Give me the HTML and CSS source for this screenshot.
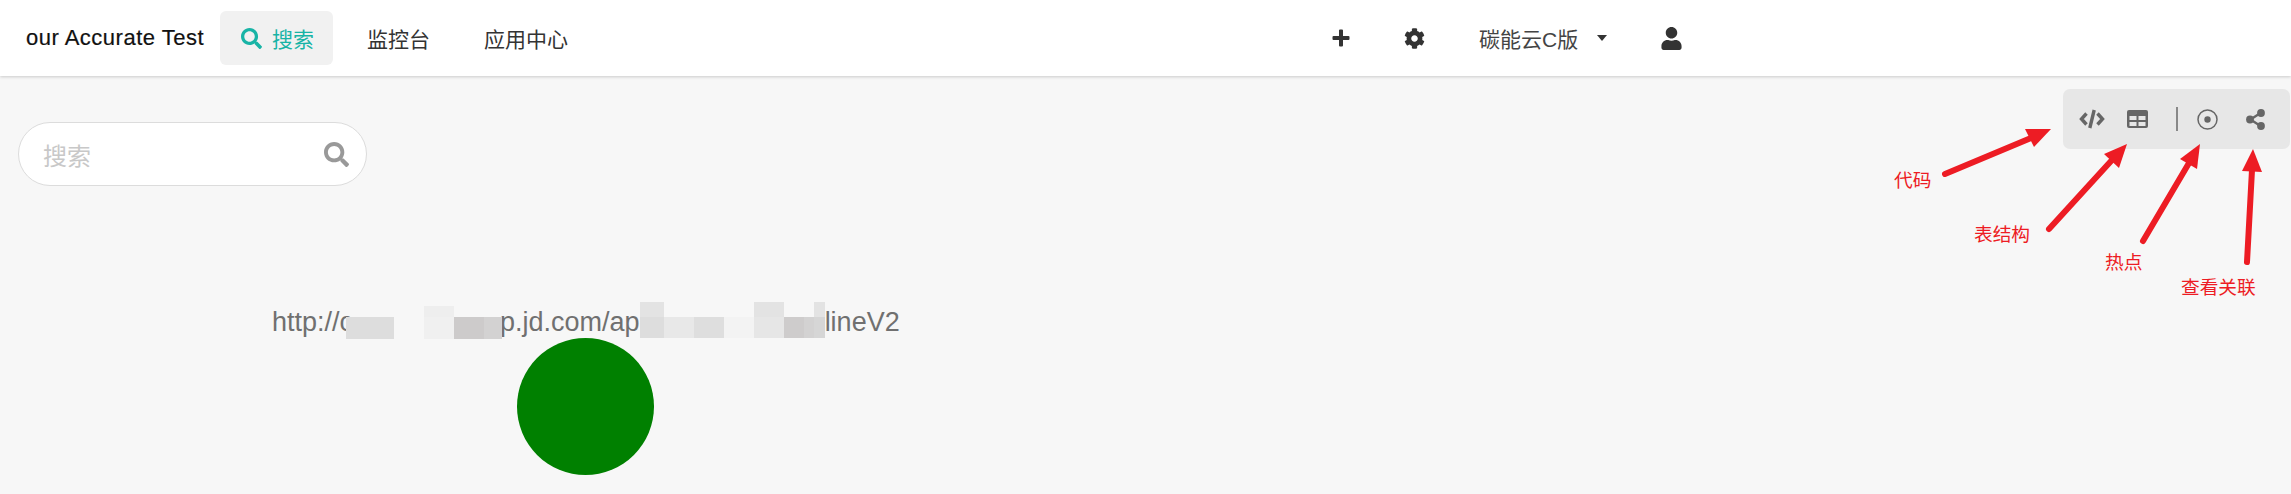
FILE: index.html
```html
<!DOCTYPE html>
<html lang="en">
<head>
  <meta charset="UTF-8" />
  <title>Accurate Test</title>
  <link rel="stylesheet" href="styles.css">
</head>
<body>

  <!-- Top nav -->
  <div class="navbar">
    <div class="brand">our Accurate Test</div>
    <div class="nav-links">
      <a class="nav-item active">
        <svg class="nav-search" viewBox="0 0 512 512"><path fill="currentColor" d="M505 442.7L405.3 343c-4.5-4.5-10.6-7-17-7H372c27.6-35.3 44-79.7 44-128C416 93.1 322.9 0 208 0S0 93.1 0 208s93.1 208 208 208c48.3 0 92.7-16.4 128-44v16.3c0 6.4 2.5 12.5 7 17l99.7 99.7c9.4 9.4 24.6 9.4 33.9 0l28.3-28.3c9.4-9.4 9.4-24.6.1-34zM208 336c-70.7 0-128-57.2-128-128 0-70.7 57.2-128 128-128 70.7 0 128 57.2 128 128 0 70.7-57.2 128-128 128z"/></svg>
        搜索
      </a>
      <a class="nav-item">监控台</a>
      <a class="nav-item">应用中心</a>
    </div>
    <div class="nav-right">
      <svg class="icon-plus" viewBox="0 0 18 18"><path fill="currentColor" d="M7 1.500a1 1 0 0 1 1-1h2a1 1 0 0 1 1 1V7h5.500a1 1 0 0 1 1 1v2a1 1 0 0 1-1 1H11v5.500a1 1 0 0 1-1 1H8a1 1 0 0 1-1-1V11H1.500a1 1 0 0 1-1-1V8a1 1 0 0 1 1-1H7z"/></svg>
      <svg class="icon-gear" viewBox="0 0 512 512"><path fill="currentColor" d="M487.4 315.7l-42.6-24.6c4.3-23.2 4.3-47 0-70.2l42.6-24.6c4.900-2.800 7.100-8.600 5.500-14-11.100-35.600-30-67.800-54.700-94.600-3.800-4.100-10-5.100-14.800-2.300L380.800 110c-17.900-15.400-38.500-27.300-60.800-35.100V25.800c0-5.600-3.900-10.500-9.400-11.700-36.700-8.200-74.300-7.800-109.200 0-5.500 1.200-9.400 6.100-9.400 11.700V75c-22.200 7.900-42.800 19.800-60.800 35.100L88.700 85.500c-4.900-2.800-11-1.900-14.800 2.300-24.700 26.700-43.600 58.900-54.700 94.600-1.700 5.400.6 11.200 5.500 14L67.300 221c-4.300 23.200-4.300 47 0 70.200l-42.600 24.600c-4.900 2.800-7.100 8.600-5.500 14 11.100 35.600 30 67.800 54.700 94.600 3.800 4.100 10 5.100 14.800 2.300l42.600-24.600c17.900 15.400 38.500 27.300 60.800 35.100v49.200c0 5.600 3.900 10.500 9.400 11.700 36.700 8.200 74.300 7.800 109.200 0 5.500-1.200 9.400-6.100 9.400-11.700v-49.200c22.200-7.900 42.800-19.800 60.800-35.100l42.600 24.600c4.900 2.800 11 1.900 14.800-2.300 24.700-26.700 43.600-58.900 54.700-94.600 1.500-5.500-.7-11.300-5.600-14.100zM256 336c-44.100 0-80-35.900-80-80s35.900-80 80-80 80 35.900 80 80-35.900 80-80 80z"/></svg>
      <div class="project">
        <span>碳能云C版</span>
        <i class="caret"></i>
      </div>
      <svg class="icon-user" viewBox="0 0 448 512"><path fill="currentColor" d="M224 256c70.700 0 128-57.300 128-128S294.700 0 224 0 96 57.300 96 128s57.300 128 128 128zm89.600 32h-16.700c-22.200 10.200-46.900 16-72.900 16s-50.600-5.800-72.900-16h-16.700C60.200 288 0 348.200 0 422.400V464c0 26.500 21.500 48 48 48h352c26.500 0 48-21.500 48-48v-41.600c0-74.200-60.200-134.400-134.400-134.400z"/></svg>
    </div>
  </div>

  <div class="main">
    <div class="top-row">
      <div class="search-box">
        <span class="placeholder">搜索</span>
        <svg class="search-icon" viewBox="0 0 512 512"><path fill="currentColor" d="M505 442.7L405.3 343c-4.5-4.5-10.6-7-17-7H372c27.6-35.3 44-79.7 44-128C416 93.1 322.9 0 208 0S0 93.1 0 208s93.1 208 208 208c48.3 0 92.7-16.4 128-44v16.3c0 6.4 2.5 12.5 7 17l99.7 99.7c9.4 9.4 24.6 9.4 33.9 0l28.3-28.3c9.4-9.4 9.4-24.6.1-34zM208 336c-70.7 0-128-57.2-128-128 0-70.7 57.2-128 128-128 70.700 0 128 57.200 128 128 0 70.700-57.200 128-128 128z"/></svg>
      </div>

      <div class="toolbar">
        <svg class="tool-code" viewBox="0 0 26 20"><path fill="none" stroke="currentColor" stroke-width="3.400" d="M7.500 4.500 2.500 10l5 5.500M18.500 4.500 23.500 10l-5 5.500M15.200 1 10.800 19"/></svg>
        <svg class="tool-table" viewBox="0 0 21 18">
          <rect width="21" height="18" rx="2" fill="currentColor"/>
          <rect x="2.500" y="6" width="7" height="4" fill="#e7e7e7"/>
          <rect x="11.500" y="6" width="7" height="4" fill="#e7e7e7"/>
          <rect x="2.500" y="12" width="7" height="4" fill="#e7e7e7"/>
          <rect x="11.500" y="12" width="7" height="4" fill="#e7e7e7"/>
        </svg>
        <i class="tool-divider"></i>
        <svg class="tool-hot" viewBox="0 0 21 21">
          <circle cx="10.500" cy="10.500" r="9.500" fill="none" stroke="currentColor" stroke-width="1.500"/>
          <circle cx="10.500" cy="10.500" r="3.200" fill="currentColor"/>
        </svg>
        <svg class="tool-share" viewBox="0 0 19 21">
          <path fill="none" stroke="currentColor" stroke-width="2.400" d="M14.500 4 4.500 10.500 14.500 17"/>
          <circle cx="15" cy="4" r="3.900" fill="currentColor"/>
          <circle cx="4" cy="10.500" r="3.900" fill="currentColor"/>
          <circle cx="15" cy="17" r="3.900" fill="currentColor"/>
        </svg>
      </div>
    </div>

    <!-- Graph node, parts of the address are pixelated in the source -->
    <div class="node">
      <div class="node-url">
        <span>http://c</span>
        <svg class="mosaic mosaic-a" width="156" height="37">
          <rect x="0" y="15" width="48" height="22" fill="#dddddd"/>
          <rect x="78" y="4" width="30" height="11" fill="#eeeeee"/>
          <rect x="78" y="15" width="30" height="22" fill="#f0f0f0"/>
          <rect x="108" y="15" width="30" height="22" fill="#cdcbcb"/>
          <rect x="138" y="15" width="18" height="22" fill="#d3d2d2"/>
        </svg>
        <span>p.jd.com/ap</span>
        <svg class="mosaic" width="185" height="37">
          <rect x="0" y="0" width="24" height="15" fill="#e3e3e3"/>
          <rect x="0" y="15" width="24" height="21" fill="#dddddd"/>
          <rect x="24" y="15" width="30" height="21" fill="#e8e8e8"/>
          <rect x="54" y="15" width="30" height="21" fill="#dedede"/>
          <rect x="84" y="15" width="30" height="21" fill="#f3f3f3"/>
          <rect x="114" y="0" width="30" height="15" fill="#e3e3e3"/>
          <rect x="114" y="15" width="30" height="21" fill="#e6e6e6"/>
          <rect x="144" y="15" width="30" height="21" fill="#cecccc"/>
          <rect x="164" y="15" width="11" height="21" fill="#d3d2d2"/>
          <rect x="174" y="0" width="11" height="15" fill="#e3e3e3"/>
          <rect x="174" y="15" width="11" height="21" fill="#d6d6d6"/>
        </svg>
        <span>lineV2</span>
      </div>
      <div class="node-dot"></div>
    </div>
  </div>

  <!-- Red annotations drawn on top of the screenshot -->
  <svg class="arrows" viewBox="0 0 2291 494">
    <g stroke="#ed1c24" stroke-width="6" stroke-linecap="round" fill="none">
      <path d="M1945 174 2036 136"/>
      <path d="M2049 229 2112 160"/>
      <path d="M2143 241 2189 163"/>
      <path d="M2247 262 2252 170"/>
    </g>
    <g fill="#ed1c24">
      <polygon points="2051,129 2025,129 2034,147"/>
      <polygon points="2127,144 2104,154 2119,168"/>
      <polygon points="2200,144 2180,159 2197,169"/>
      <polygon points="2253,149 2242,171 2262,172"/>
    </g>
  </svg>
  <span class="note note-code">代码</span>
  <span class="note note-table">表结构</span>
  <span class="note note-hot">热点</span>
  <span class="note note-link">查看关联</span>

</body>
</html>
```

FILE: styles.css
```css
* {
  box-sizing: border-box;
}

html, body {
  height: 100%;
}

body {
  margin: 0;
  position: relative;
  overflow: hidden;
  background: #f7f7f7;
  font-family: 'Liberation Sans', 'Noto Sans CJK SC', sans-serif;
}

.navbar {
  display: flex;
  align-items: center;
  height: 76px;
  padding-left: 26px;
  background: #fff;
  box-shadow: 0 1px 3px rgba(0, 0, 0, 0.18);
}

.brand {
  width: 177px;
  margin-right: 17px;
  font-size: 22px;
  letter-spacing: 0.5px;
  white-space: nowrap;
  color: #111;
  -webkit-text-stroke: 0.2px #111;
}

.nav-links {
  display: flex;
  gap: 14px;
}

.nav-item {
  display: flex;
  align-items: center;
  height: 54px;
  padding: 0 20px;
  border-radius: 6px;
  font-size: 21px;
  color: #333;
}

.nav-item.active {
  gap: 10px;
  padding: 0 19px 0 21px;
  background: #f1f1f1;
  color: #18b4a6;
}

.nav-search {
  width: 21px;
  height: 21px;
}

.nav-right {
  display: flex;
  align-items: center;
  gap: 54px;
  margin-left: 744px;
  color: #333;
}

.icon-plus {
  width: 18px;
  height: 18px;
}

.icon-gear {
  width: 21px;
  height: 21px;
}

.icon-user {
  width: 21px;
  height: 23px;
}

.project {
  display: flex;
  align-items: center;
  gap: 19px;
  font-size: 21px;
  color: #444;
}

.caret {
  width: 0;
  height: 0;
  border-top: 6px solid #333;
  border-left: 5px solid transparent;
  border-right: 5px solid transparent;
}

.main {
  padding: 13px 1px 0 18px;
}

.top-row {
  display: flex;
  justify-content: space-between;
  align-items: flex-start;
}

.search-box {
  display: flex;
  justify-content: space-between;
  align-items: center;
  width: 349px;
  height: 64px;
  margin-top: 33px;
  padding: 0 17px 0 24px;
  background: #fff;
  border: 1px solid #dcdcdc;
  border-radius: 32px;
}

.placeholder {
  font-size: 24px;
  color: #c8c8c8;
}

.search-icon {
  width: 25px;
  height: 25px;
  color: #999;
}

.toolbar {
  display: flex;
  align-items: center;
  width: 227px;
  height: 60px;
  padding-left: 16px;
  background: #e7e7e7;
  border-radius: 7px;
  color: #666;
}

.tool-code {
  width: 26px;
  height: 20px;
}

.tool-table {
  width: 21px;
  height: 18px;
  margin-left: 22px;
}

.tool-divider {
  width: 2px;
  height: 24px;
  margin-left: 28px;
  background: #888;
}

.tool-hot {
  width: 21px;
  height: 21px;
  margin-left: 19px;
}

.tool-share {
  width: 19px;
  height: 21px;
  margin-left: 28px;
}

.node {
  display: flex;
  flex-direction: column;
  align-items: center;
  width: fit-content;
  margin: 116px 0 0 254px;
}

.node-url {
  display: flex;
  align-items: flex-start;
  height: 37px;
  font-size: 27px;
  line-height: 37px;
  color: #707070;
}

.node-url span {
  margin-top: 2px;
}

.mosaic {
  position: relative;
  flex-shrink: 0;
}

.mosaic-a {
  margin: 0 -2px 0 -7px;
}

.node-dot {
  width: 137px;
  height: 137px;
  margin-top: -1px;
  background: #008000;
  border-radius: 50%;
}

.arrows {
  position: absolute;
  top: 0;
  left: 0;
  width: 2291px;
  height: 494px;
}

.note {
  position: absolute;
  font-size: 18.7px;
  line-height: 24px;
  color: #ed1c24;
}

.note-code {
  left: 1894px;
  top: 169px;
}

.note-table {
  left: 1974px;
  top: 223px;
}

.note-hot {
  left: 2105px;
  top: 251px;
}

.note-link {
  left: 2181px;
  top: 276px;
}
```
